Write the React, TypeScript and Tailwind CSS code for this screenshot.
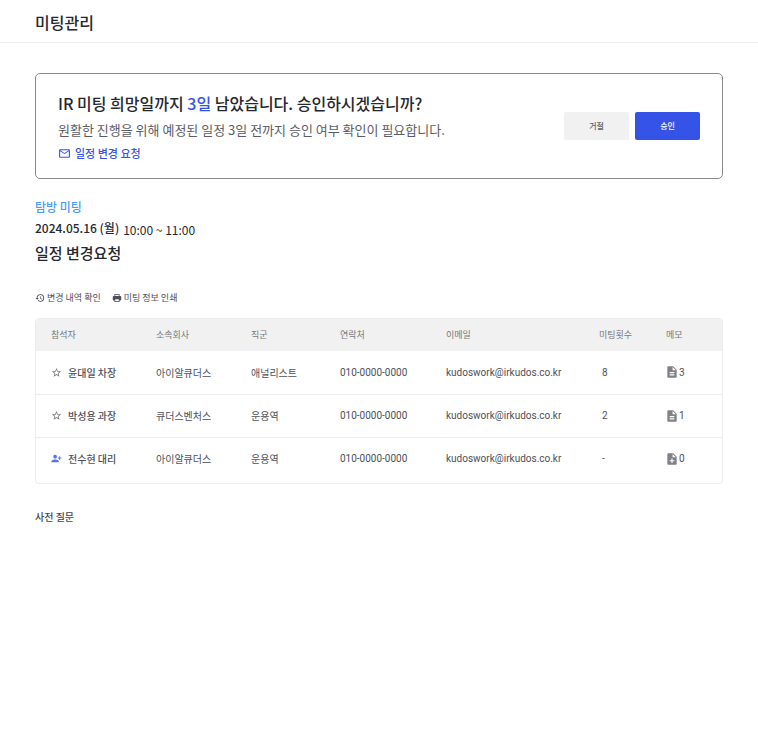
import React from 'react';
import { MdDescription, MdHistory, MdMailOutline, MdNoteAdd, MdPersonAddAlt1, MdStarBorder } from 'react-icons/md';

interface Attendee {
  name: string;
  company: string;
  job: string;
  phone: string;
  email: string;
  meetings: string;
  memos: number;
  isNew?: boolean;
}

const attendees: Attendee[] = [
  { name: '윤대일 차장', company: '아이알큐더스', job: '애널리스트', phone: '010-0000-0000', email: 'kudoswork@irkudos.co.kr', meetings: '8', memos: 3 },
  { name: '박성용 과장', company: '큐더스벤처스', job: '운용역', phone: '010-0000-0000', email: 'kudoswork@irkudos.co.kr', meetings: '2', memos: 1 },
  { name: '전수현 대리', company: '아이알큐더스', job: '운용역', phone: '010-0000-0000', email: 'kudoswork@irkudos.co.kr', meetings: '-', memos: 0, isNew: true },
];

const columns = [
  { label: '참석자', width: 'w-[105px]' },
  { label: '소속회사', width: 'w-[95px]' },
  { label: '직군', width: 'w-[89px]' },
  { label: '연락처', width: 'w-[106px]' },
  { label: '이메일', width: 'w-[153px]' },
  { label: '미팅횟수', width: 'w-[67px]' },
  { label: '메모', width: 'w-[71px]' },
];

const PrintIcon = () => (
  <svg width="10" height="10" viewBox="0 0 20 20" aria-hidden="true">
    <path
      fill="currentColor"
      fillRule="evenodd"
      d="M5 2h10v4h1.500a2 2 0 0 1 2 2v5a2 2 0 0 1-2 2H15v3H5v-3H3.500a2 2 0 0 1-2-2V8a2 2 0 0 1 2-2H5V2Zm1.500 1.500V6h7V3.500h-7Zm0 9v4h7v-4h-7Z"
    />
  </svg>
);

const ApprovalCard = () => (
  <section className="flex items-center justify-between rounded-[5px] border border-[#88898c] pt-[17px] pb-4 px-[22px]">
    <div>
      <h2 className="text-[16px] leading-6 font-medium">
        IR 미팅 희망일까지 <span className="text-[#3653e8]">3일</span> 남았습니다. 승인하시겠습니까?
      </h2>
      <p className="mt-[5px] text-[13px] leading-5 text-[#5b5d66]">
        원활한 진행을 위해 예정된 일정 3일 전까지 승인 여부 확인이 필요합니다.
      </p>
      <a href="#reschedule" className="mt-[5px] mb-px flex items-center gap-1 text-[11px] leading-4 font-medium text-[#3653e8]">
        <MdMailOutline size={13} />
        일정 변경 요청
      </a>
    </div>
    <div className="flex shrink-0 gap-[6px] pb-[2px]">
      <button className="h-7 w-[65px] rounded-[2px] bg-[#f1f1f1] text-[8px] font-medium text-[#5b5d66]">거절</button>
      <button className="h-7 w-[65px] rounded-[2px] bg-[#3653e8] text-[8px] font-medium text-white">승인</button>
    </div>
  </section>
);

const AttendeeTable = () => (
  <div className="overflow-hidden rounded-[4px] border border-[#ececee] pb-[3px]">
    <table className="w-full table-fixed text-left">
      <thead className="bg-[#f1f1f1] text-[9px] text-[#77787d]">
        <tr className="h-8">
          {columns.map((col) => (
            <th key={col.label} scope="col" className={`pl-[15px] font-normal whitespace-nowrap ${col.width}`}>
              {col.label}
            </th>
          ))}
        </tr>
      </thead>
      <tbody className="text-[10px] text-[#4d4f5a]">
        {attendees.map((a) => (
          <tr key={a.name} className="h-[43px] border-b border-[#ececee] last:border-b-0">
            <td className="pl-[15px] font-medium whitespace-nowrap">
              <span className="flex items-center gap-[6px]">
                {a.isNew ? (
                  <MdPersonAddAlt1 size={11} className="text-[#5a72ee]" />
                ) : (
                  <MdStarBorder size={11} className="text-[#77787d]" />
                )}
                {a.name}
              </span>
            </td>
            <td className="pl-[15px] whitespace-nowrap">{a.company}</td>
            <td className="pl-[15px] whitespace-nowrap">{a.job}</td>
            <td className="pl-[15px] font-['Roboto',sans-serif] whitespace-nowrap">{a.phone}</td>
            <td className="pl-[15px] font-['Roboto',sans-serif] whitespace-nowrap">{a.email}</td>
            <td className="pl-[18px] font-['Roboto',sans-serif]">{a.meetings}</td>
            <td className="pl-[14px] font-['Roboto',sans-serif]">
              <span className="flex items-center">
                {a.memos > 0 ? (
                  <MdDescription size={14} className="text-[#808186]" />
                ) : (
                  <MdNoteAdd size={14} className="text-[#808186]" />
                )}
                {a.memos}
              </span>
            </td>
          </tr>
        ))}
      </tbody>
    </table>
  </div>
);

export default function App() {
  return (
    <div className="min-h-screen bg-white font-['Noto_Sans_CJK_KR',sans-serif] text-[#252833]">
      <header className="border-b border-[#ececee] px-[35px] pt-[10px] pb-2">
        <h1 className="text-[16px] leading-6 font-medium">미팅관리</h1>
      </header>

      <main className="px-[35px] pt-[30px] pb-8">
        <ApprovalCard />

        {/* Meeting summary */}
        <section className="mt-5">
          <p className="text-[12px] leading-4 font-medium text-[#4a9df8]">탐방 미팅</p>
          <p className="mt-[3px] flex items-end gap-1 text-[12px]">
            <span className="pb-[2px] leading-5 font-medium">2024.05.16 (월)</span>
            <span className="leading-5">10:00 ~ 11:00</span>
          </p>
          <h2 className="mt-px text-[15px] leading-6 font-medium">일정 변경요청</h2>
        </section>

        <div className="mt-[25px] mb-3 flex gap-[11px] text-[9px] leading-4 text-[#4d4f5a]">
          <button className="flex items-center gap-[2px]">
            <MdHistory size={10} />
            변경 내역 확인
          </button>
          <button className="flex items-center gap-[2px]">
            <PrintIcon />
            미팅 정보 인쇄
          </button>
        </div>

        <AttendeeTable />

        <h3 className="mt-[25px] text-[10px] leading-4 font-medium text-[#44464d]">사전 질문</h3>
      </main>
    </div>
  );
}
